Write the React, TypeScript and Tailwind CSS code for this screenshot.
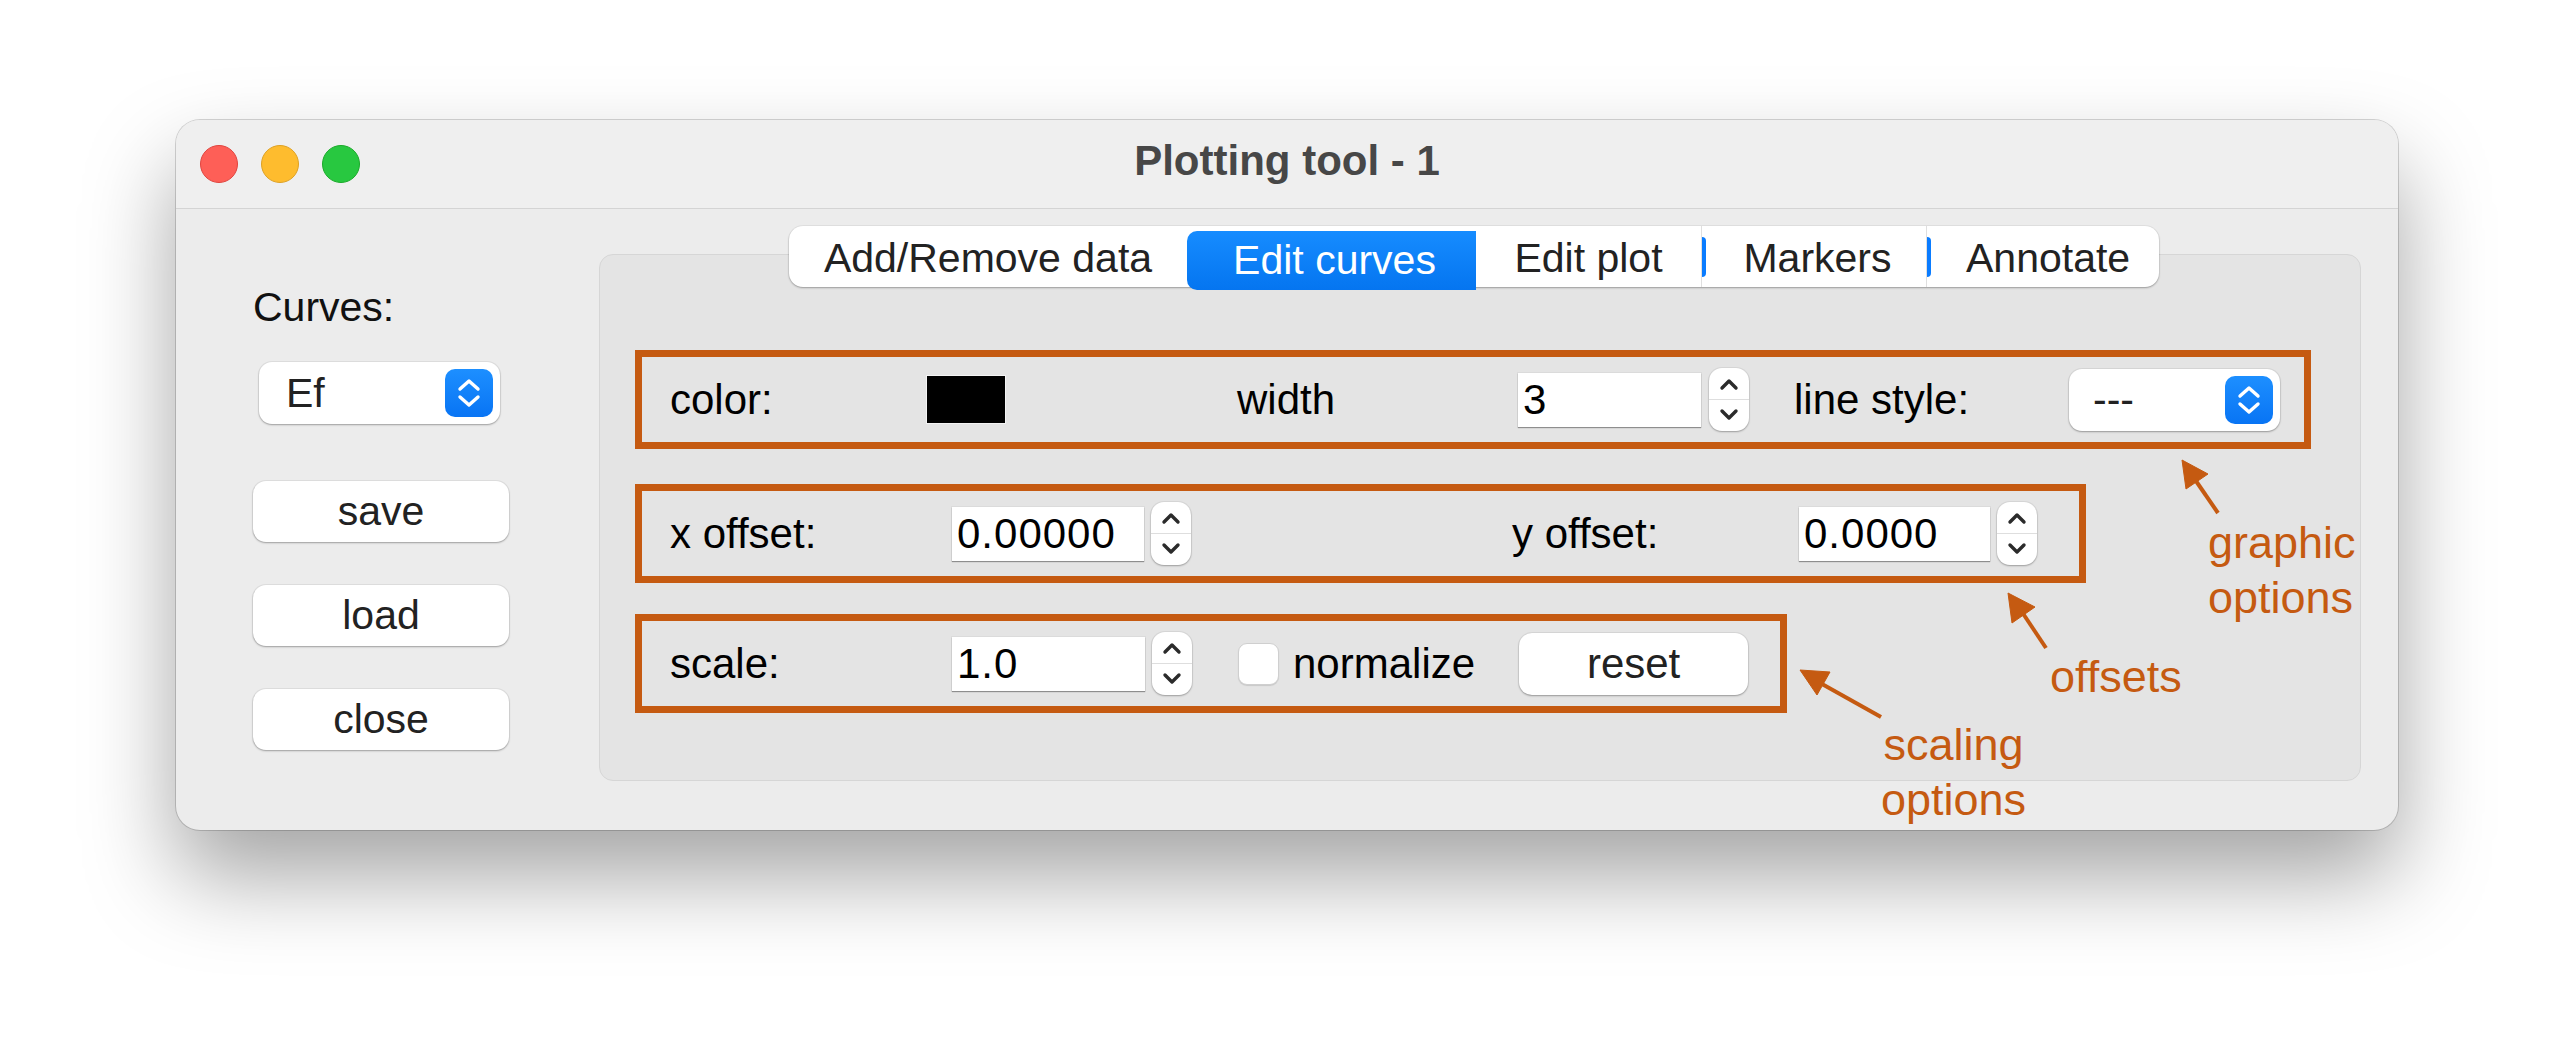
import React from 'react';

const ORANGE = '#c55a11';

const UpDownIcon = () => (
  <svg width="24" height="30" viewBox="0 0 24 30" fill="none">
    <path d="M3 11 L12 3 L21 11" stroke="white" strokeWidth="3.4" strokeLinecap="round" strokeLinejoin="round" />
    <path d="M3 19 L12 27 L21 19" stroke="white" strokeWidth="3.4" strokeLinecap="round" strokeLinejoin="round" />
  </svg>
);

const PopupSelect = ({ value, width, height, textPad }: { value: string; width: string; height: string; textPad: string }) => (
  <div
    className={`flex items-center justify-between rounded-[13px] bg-white pr-[7px] shadow-[0_1px_2px_rgba(0,0,0,0.3),0_0_0_1px_rgba(0,0,0,0.05)] ${width} ${height}`}
  >
    <span className={`text-[41px] leading-none text-[#222] ${textPad}`}>{value}</span>
    <div className="flex h-[48px] w-[48px] items-center justify-center rounded-[10px] bg-gradient-to-b from-[#1d8fff] to-[#0874f4]">
      <UpDownIcon />
    </div>
  </div>
);

const Stepper = () => (
  <div className="ml-[7px] flex h-[63px] w-[40px] flex-col rounded-[13px] bg-white shadow-[0_1px_2px_rgba(0,0,0,0.28),0_0_0_1px_rgba(0,0,0,0.05)]">
    <div className="flex flex-1 items-center justify-center border-b border-[#dedede] pt-[2px]">
      <svg width="20" height="13" viewBox="0 0 20 13" fill="none">
        <path d="M3 10 L10 3 L17 10" stroke="#2b2b2b" strokeWidth="3.4" strokeLinecap="round" strokeLinejoin="round" />
      </svg>
    </div>
    <div className="flex flex-1 items-center justify-center pb-[2px]">
      <svg width="20" height="13" viewBox="0 0 20 13" fill="none">
        <path d="M3 3 L10 10 L17 3" stroke="#2b2b2b" strokeWidth="3.4" strokeLinecap="round" strokeLinejoin="round" />
      </svg>
    </div>
  </div>
);

const NumberField = ({ value, width }: { value: string; width: string }) => (
  <div className={`flex h-[54px] items-center bg-white pl-[5px] shadow-[0_1px_1px_rgba(0,0,0,0.35),0_0_0_1px_rgba(0,0,0,0.04)] ${width}`}>
    <span className="text-[42px] leading-none tracking-[1px] text-black">{value}</span>
  </div>
);

const SideButton = ({ label }: { label: string }) => (
  <button className="flex h-[61px] w-[256px] items-center justify-center rounded-[13px] bg-white text-[41px] leading-none text-[#222] shadow-[0_1px_2px_rgba(0,0,0,0.3),0_0_0_1px_rgba(0,0,0,0.05)]">
    {label}
  </button>
);

const Crescent = () => (
  <div className="flex h-full w-[5px] items-center border-l border-[#dfdfdf]">
    <div className="h-[40px] w-[4px] rounded-r-full bg-[#0a7cff]" />
  </div>
);

const Tabs = () => (
  <div className="-mt-[29px] ml-[189px] flex h-[61px] w-[1370px] items-stretch rounded-[14px] bg-white text-[41px] leading-none text-[#222] shadow-[0_1px_2px_rgba(0,0,0,0.3),0_0_0_1px_rgba(0,0,0,0.04)]">
    <div className="flex w-[398px] items-center justify-center pt-[3px]">Add/Remove data</div>
    <div className="mt-[5px] flex h-[59px] w-[289px] items-center justify-center rounded-l-[10px] bg-gradient-to-b from-[#168cff] to-[#0575f0] pl-[6px] text-white">
      Edit curves
    </div>
    <div className="flex w-[225px] items-center justify-center pt-[3px]">Edit plot</div>
    <Crescent />
    <div className="flex w-[220px] items-center justify-center pl-[3px] pt-[3px]">Markers</div>
    <Crescent />
    <div className="flex w-[228px] items-center pl-[35px] pt-[3px]">Annotate</div>
  </div>
);

const Row = ({ width, mt, children }: { width: string; mt: string; children: React.ReactNode }) => (
  <div className={`ml-[35px] flex h-[99px] items-center border-[7px] border-[#c55a11] pl-[28px] text-[42px] leading-none text-black ${width} ${mt}`}>
    {children}
  </div>
);

const Panel = () => (
  <div className="flex h-[527px] w-[1762px] flex-col rounded-[14px] border border-[#d6d6d6] bg-[#e4e4e4]">
    <Tabs />
    <Row width="w-[1676px]" mt="mt-[63px]">
      <span className="w-[257px]">color:</span>
      <div className="h-[47px] w-[78px] bg-black ring-1 ring-[#f4f4f4]" />
      <span className="ml-[232px] w-[281px]">width</span>
      <NumberField value="3" width="w-[183px]" />
      <div className="ml-[1px]">
        <Stepper />
      </div>
      <span className="ml-[45px] w-[275px]">line style:</span>
      <PopupSelect value="---" width="w-[211px]" height="h-[62px]" textPad="pl-[24px]" />
    </Row>
    <Row width="w-[1451px]" mt="mt-[35px]">
      <span className="w-[282px]">x offset:</span>
      <NumberField value="0.00000" width="w-[192px]" />
      <Stepper />
      <span className="ml-[321px] w-[287px]">y offset:</span>
      <NumberField value="0.0000" width="w-[191px]" />
      <Stepper />
    </Row>
    <Row width="w-[1152px]" mt="mt-[31px]">
      <span className="w-[282px]">scale:</span>
      <NumberField value="1.0" width="w-[193px]" />
      <Stepper />
      <div className="ml-[46px] h-[42px] w-[41px] rounded-[9px] border border-[#cfcfcf] bg-white shadow-[0_1px_1px_rgba(0,0,0,0.12)]" />
      <span className="ml-[14px]">normalize</span>
      <button className="ml-[44px] flex h-[62px] w-[229px] items-center justify-center rounded-[13px] bg-white text-[42px] leading-none text-[#222] shadow-[0_1px_2px_rgba(0,0,0,0.3),0_0_0_1px_rgba(0,0,0,0.05)]">
        reset
      </button>
    </Row>
  </div>
);

const Callouts = () => (
  <>
    <svg className="pointer-events-none absolute left-0 top-0" width="2575" height="1063" viewBox="0 0 2575 1063">
      <g stroke={ORANGE} strokeWidth="4" fill={ORANGE}>
        <line x1="2196" y1="481" x2="2218" y2="513" />
        <polygon points="2182,460 2186,489 2208,474" strokeWidth="1" />
        <line x1="2022" y1="612" x2="2046" y2="648" />
        <polygon points="2008,593 2012,623 2035,607" strokeWidth="1" />
        <line x1="1822" y1="684" x2="1881" y2="717" />
        <polygon points="1800,670 1817,695 1830,672" strokeWidth="1" />
      </g>
    </svg>
    <div className="absolute left-[2208px] top-[515px] text-[45px] leading-[55px] text-[#c55a11]">
      graphic
      <br />
      options
    </div>
    <div className="absolute left-[2050px] top-[649px] text-[45px] leading-[55px] text-[#c55a11]">offsets</div>
    <div className="absolute left-[1881px] top-[717px] text-center text-[45px] leading-[55px] text-[#c55a11]">
      scaling
      <br />
      options
    </div>
  </>
);

export default function App() {
  return (
    <div
      className="relative h-[1063px] w-[2575px] overflow-hidden bg-white pl-[176px] pt-[120px]"
      style={{ fontFamily: '"Liberation Sans", Arial, sans-serif' }}
    >
      <div className="flex h-[710px] w-[2222px] flex-col overflow-hidden rounded-[24px] bg-[#ececec] shadow-[0_46px_90px_rgba(0,0,0,0.36),0_0_0_1px_rgba(0,0,0,0.16)]">
        <div className="grid h-[89px] grid-cols-[1fr_auto_1fr] items-center border-b border-[#d4d4d4] bg-[#efefef]">
          <div className="flex gap-[23px] pl-[24px]">
            <div className="h-[38px] w-[38px] rounded-full border border-[#e0443e] bg-[#fe5f57]" />
            <div className="h-[38px] w-[38px] rounded-full border border-[#dea123] bg-[#febc2e]" />
            <div className="h-[38px] w-[38px] rounded-full border border-[#1aab29] bg-[#28c840]" />
          </div>
          <div className="pb-[6px] text-[42px] font-bold leading-none text-[#474747]">Plotting tool - 1</div>
          <div />
        </div>
        <div className="flex flex-1 items-start pl-[77px] pt-[45px]">
          <div className="mt-[29px] flex w-[256px] flex-col">
            <span className="h-[48px] text-[41px] leading-[48px] text-[#111]">Curves:</span>
            <div className="ml-[6px] mt-[31px]">
              <PopupSelect value="Ef" width="w-[241px]" height="h-[62px]" textPad="pl-[27px]" />
            </div>
            <div className="mt-[57px] flex flex-col gap-[43px]">
              <SideButton label="save" />
              <SideButton label="load" />
              <SideButton label="close" />
            </div>
          </div>
          <div className="ml-[90px]">
            <Panel />
          </div>
        </div>
      </div>
      <Callouts />
    </div>
  );
}
